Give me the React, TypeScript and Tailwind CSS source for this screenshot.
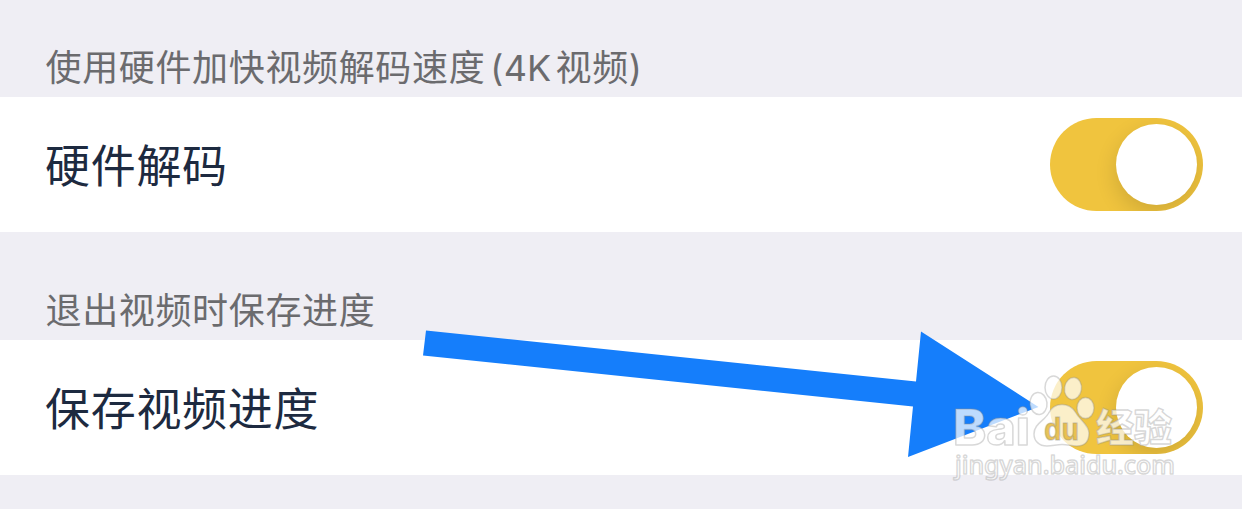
import { useState } from "react";
import * as Switch from "@radix-ui/react-switch";

type ToggleRowProps = {
  label: string;
};

function ToggleRow({ label }: ToggleRowProps) {
  const [on, setOn] = useState(true);

  return (
    <div className="flex h-[135px] items-center justify-between bg-white pr-[39px] pl-[45px]">
      <span className="pt-[3px] text-[45px] leading-none tracking-[0.7px] text-[#1d2a40]">{label}</span>
      <Switch.Root
        checked={on}
        onCheckedChange={setOn}
        aria-label={label}
        className="flex h-[93px] w-[153px] items-center overflow-hidden rounded-full bg-gray-300 px-1.5 data-[state=checked]:justify-end data-[state=checked]:bg-[#f0c43e]"
      >
        <Switch.Thumb className="block size-[81px] rounded-full bg-white shadow-[0_8px_22px_rgba(0,0,0,0.14)]" />
      </Switch.Root>
    </div>
  );
}

function Arrow() {
  return (
    <svg className="pointer-events-none absolute inset-0" width="1242" height="509" viewBox="0 0 1242 509">
      <path d="M426 330.500 L916 381.500 L921 331.500 L1038.500 407 L908 457 L913 406.500 L423 355.500 Z" fill="#157efb" />
    </svg>
  );
}

function Watermark() {
  return (
    <svg
      className="pointer-events-none absolute inset-0"
      width="1242"
      height="509"
      viewBox="0 0 1242 509"
      fill="#fff"
      fillOpacity="0.72"
      stroke="#8c8c8c"
      strokeOpacity="0.34"
      strokeWidth="1.5"
      strokeLinejoin="round"
    >
      <text x="953" y="445" fontSize="50" fontWeight="800" textLength="77" lengthAdjust="spacingAndGlyphs" className="font-['Inter',sans-serif]">
        Bai
      </text>

      {/* Paw */}
      <ellipse cx="1038.500" cy="403.500" rx="8.500" ry="11" transform="rotate(-6 1038.500 403.500)" />
      <ellipse cx="1053.500" cy="387.500" rx="8.500" ry="11.500" />
      <ellipse cx="1073" cy="388.500" rx="8.500" ry="11" transform="rotate(8 1073 388.500)" />
      <ellipse cx="1085.500" cy="408" rx="8.500" ry="10.500" />
      <path d="M1062 404.500 C1055 404.500 1051 408 1048 414 C1044 421 1034 424 1034 434 C1034 441 1039 446 1047 446 C1053 446 1056 444.500 1062 444.500 C1068 444.500 1071 446 1077 446 C1085 446 1089 441 1089 433 C1089 425 1080 420 1076 413 C1073 408 1069 404.500 1062 404.500 Z" />
      <text x="1044" y="440" fontSize="31" fontWeight="700" fill="#e6b838" fillOpacity="0.85" textLength="35" lengthAdjust="spacingAndGlyphs" className="font-['Liberation_Sans',sans-serif]">
        du
      </text>

      <text x="1096" y="441" fontSize="38" fontWeight="900" textLength="76" lengthAdjust="spacingAndGlyphs" className="font-['Noto_Sans_CJK_SC',sans-serif]">
        经验
      </text>
      <text x="955" y="474" fontSize="25" fontWeight="500" textLength="220" className="font-['Noto_Sans',sans-serif]">
        jingyan.baidu.com
      </text>
    </svg>
  );
}

export default function App() {
  return (
    <main className="relative h-[509px] w-[1242px] overflow-hidden bg-[#efeef4] font-['Inter','Noto_Sans_CJK_SC',sans-serif]">
      {/* Hardware decoding */}
      <div className="flex h-[97px] items-end pb-[11px] pl-[45.5px] text-[36px] leading-none tracking-[0.65px] text-[#6b6b6e]">
        <span>使用硬件加快视频解码速度</span>
        <span className="ml-[5px] tracking-[0.2px]">(4K</span>
        <span className="ml-1">视频)</span>
      </div>
      <ToggleRow label="硬件解码" />

      {/* Playback progress */}
      <div className="flex h-[108px] items-end pb-[11px] pl-[45.5px] text-[36px] leading-none tracking-[0.65px] text-[#6b6b6e]">
        <span>退出视频时保存进度</span>
      </div>
      <ToggleRow label="保存视频进度" />

      <Arrow />
      <Watermark />
    </main>
  );
}
